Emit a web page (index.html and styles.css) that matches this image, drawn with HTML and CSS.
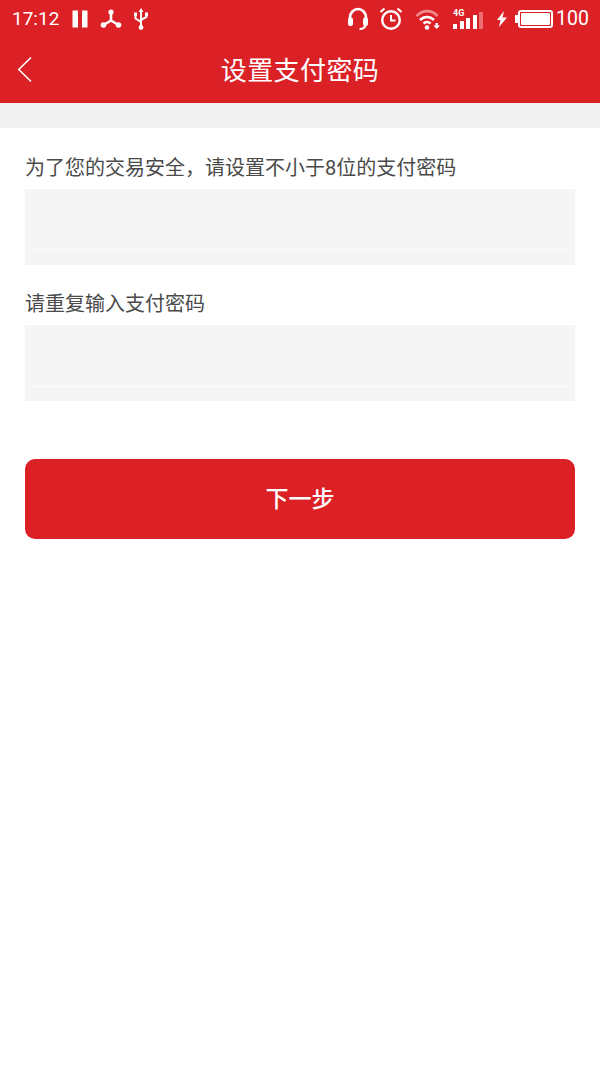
FILE: index.html
```html
<!DOCTYPE html>
<html lang="zh">
<head>
<meta charset="utf-8">
<title>设置支付密码</title>
<link rel="stylesheet" href="styles.css">
</head>
<body>
<header class="topbar">
  <div class="status">
    <span class="time">17:12</span>
    <svg class="ic ic-pause" width="16" height="18" viewBox="0 0 16 18"><path d="M.5 .5h5.500v17h-5.500zM10 .5h5.500v17h-5.500z" fill="#fff"/></svg>
    <svg class="ic ic-tri" width="22" height="20" viewBox="0 0 22 20"><g stroke="#fff" fill="none"><path d="M11 3v8.500L3.500 16M11 11.500l7.500 4.500" stroke-width="2.600"/></g><g fill="#fff"><circle cx="11" cy="3" r="2.600"/><circle cx="3.500" cy="16" r="2.800"/><circle cx="18.500" cy="16" r="2.800"/></g></svg>
    <svg class="ic ic-usb" width="16" height="22" viewBox="0 0 16 22"><g fill="none" stroke="#fff" stroke-width="2"><path d="M8 3v17M2.500 7v3.500L8 14M13.500 7v2L8 12"/></g><path d="M8 0l2.500 4h-5z" fill="#fff"/><circle cx="8" cy="19.500" r="2.400" fill="#fff"/><rect x="1" y="4.500" width="3" height="3.500" fill="#fff"/><rect x="12" y="4.500" width="3" height="3.500" fill="#fff"/></svg>
    <span class="spacer"></span>
    <svg class="ic ic-head" width="22" height="24" viewBox="0 0 22 24"><g fill="none" stroke="#fff" stroke-width="2.600"><path d="M3 14V10.500a8 8.500 0 0 1 16 0V14"/><path d="M18.500 17c0 3.500-2 5-6 5" stroke-width="2"/></g><rect x="1" y="10.500" width="5" height="8.500" rx="2" fill="#fff"/><rect x="16" y="10.500" width="5" height="8.500" rx="2" fill="#fff"/></svg>
    <svg class="ic ic-clock" width="24" height="24" viewBox="0 0 24 24"><circle cx="12" cy="13" r="8.800" fill="none" stroke="#fff" stroke-width="2.400"/><path d="M12 8v5.500h4.500" fill="none" stroke="#fff" stroke-width="2"/><path d="M1.500 5l4-3.500M22.500 5l-4-3.500" stroke="#fff" stroke-width="2.200"/></svg>
    <svg class="ic ic-wifi" width="26" height="24" viewBox="0 0 26 24"><g fill="none" stroke-width="2.600"><path d="M1.500 9c6.500-6.500 15-6.500 21 0" stroke="#f08a8a"/><path d="M5 13c4-4 10-4 14 0" stroke="#fff"/><path d="M8.500 16.500c2-2 5-2 7 0" stroke="#fff"/></g><circle cx="12" cy="20.500" r="2.300" fill="#fff"/><path d="M20.500 16h2.400v2.500h2.100L21.700 22l-3.200-3.500h2z" fill="#fff"/></svg>
    <span class="signal">
      <span class="net">4G</span>
      <span class="bars"><i class="b1"></i><i class="b2"></i><i class="b3"></i><i class="b4"></i><i class="b5"></i></span>
    </span>
    <svg class="ic ic-bolt" width="12" height="16" viewBox="0 0 12 16"><path d="M8 0L1 9h3.500L3 16l8-9.500H6.500z" fill="#fff"/></svg>
    <span class="battery"><span class="battery-fill"></span></span>
    <span class="level">100</span>
  </div>
  <div class="nav">
    <svg class="back" width="16" height="28" viewBox="0 0 16 28"><path d="M14 2.500L1.800 14.500 14 26.500" fill="none" stroke="#fff" stroke-width="1.600"/></svg>
    <h1 class="title">设置支付密码</h1>
  </div>
</header>
<div class="band"></div>
<main class="form">
  <label class="label label-first">为了您的交易安全，请设置不小于8位的支付密码</label>
  <div class="field"><span class="field-line"></span></div>
  <label class="label label-second">请重复输入支付密码</label>
  <div class="field"><span class="field-line field-line-low"></span></div>
  <button class="next" type="button">下一步</button>
</main>
</body>
</html>
```
FILE: styles.css
```css
* { box-sizing: border-box; }
html, body { margin: 0; padding: 0; }
body {
  width: 600px;
  height: 1067px;
  overflow: hidden;
  background: #fff;
  font-family: "Roboto", "Noto Sans CJK SC", sans-serif;
}
.topbar { height: 103px; background: #db2126; color: #fff; }
.status {
  height: 37px;
  display: flex;
  align-items: center;
  padding: 0 11px 0 12px;
}
.time { width: 49px; font-size: 19px; line-height: 37px; margin-right: 11px; white-space: nowrap; }
.ic { flex: none; display: block; }
.ic-pause { margin-right: 12px; }
.ic-tri { margin-right: 11px; }
.spacer { flex: 1; }
.ic-head { margin-right: 10px; }
.ic-clock { margin-right: 12px; }
.ic-wifi { margin-right: 12px; }
.signal { position: relative; width: 30px; height: 22px; margin-right: 13px; }
.net { position: absolute; left: 0; top: 1px; font-size: 9px; line-height: 9px; font-weight: 700; }
.bars { position: absolute; left: 0; bottom: 1px; display: flex; align-items: flex-end; gap: 2.500px; }
.bars i { display: block; width: 4px; background: #fff; }
.b1 { height: 5px; }
.b2 { height: 8px; }
.b3 { height: 11px; }
.b4 { height: 14px; }
.bars .b5 { height: 17px; background: #ee6d70; }
.ic-bolt { margin-right: 10px; }
.battery {
  position: relative;
  width: 35px;
  height: 18px;
  padding: 1px;
  border: 2px solid #fff;
  border-radius: 3px;
  margin-right: 3px;
}
.battery::before {
  content: "";
  position: absolute;
  left: -5px;
  top: 3px;
  width: 3px;
  height: 8px;
  background: #fff;
}
.battery-fill { display: block; height: 100%; background: #fff; border-radius: 1px; }
.level { font-size: 19.500px; line-height: 37px; }
.nav {
  position: relative;
  height: 66px;
  display: flex;
  align-items: center;
  justify-content: center;
}
.back { position: absolute; left: 17px; top: 18px; }
.title { margin: 0; font-size: 26px; font-weight: 400; letter-spacing: 0.400px; line-height: 66px; position: relative; top: 1px; }
.band { height: 25px; background: #f0f0f0; }
.form { padding: 0 25px; display: flex; flex-direction: column; }
.label { font-size: 20px; line-height: 30px; color: #4a4a4a; }
.label-first { margin-top: 25px; margin-bottom: 6px; }
.label-second { margin-top: 24px; margin-bottom: 6px; }
.field {
  height: 76px;
  background: #f5f5f5;
  padding: 60px 7px 0;
}
.field-line { display: block; height: 1px; background: #fdfdfd; }
.field-line-low { margin-top: 1px; }
.next {
  margin-top: 58px;
  height: 80px;
  padding: 0 0 5px;
  border: 0;
  border-radius: 10px;
  background: #db2126;
  color: #fff;
  font: 500 23px "Noto Sans CJK SC", sans-serif;
}
```
